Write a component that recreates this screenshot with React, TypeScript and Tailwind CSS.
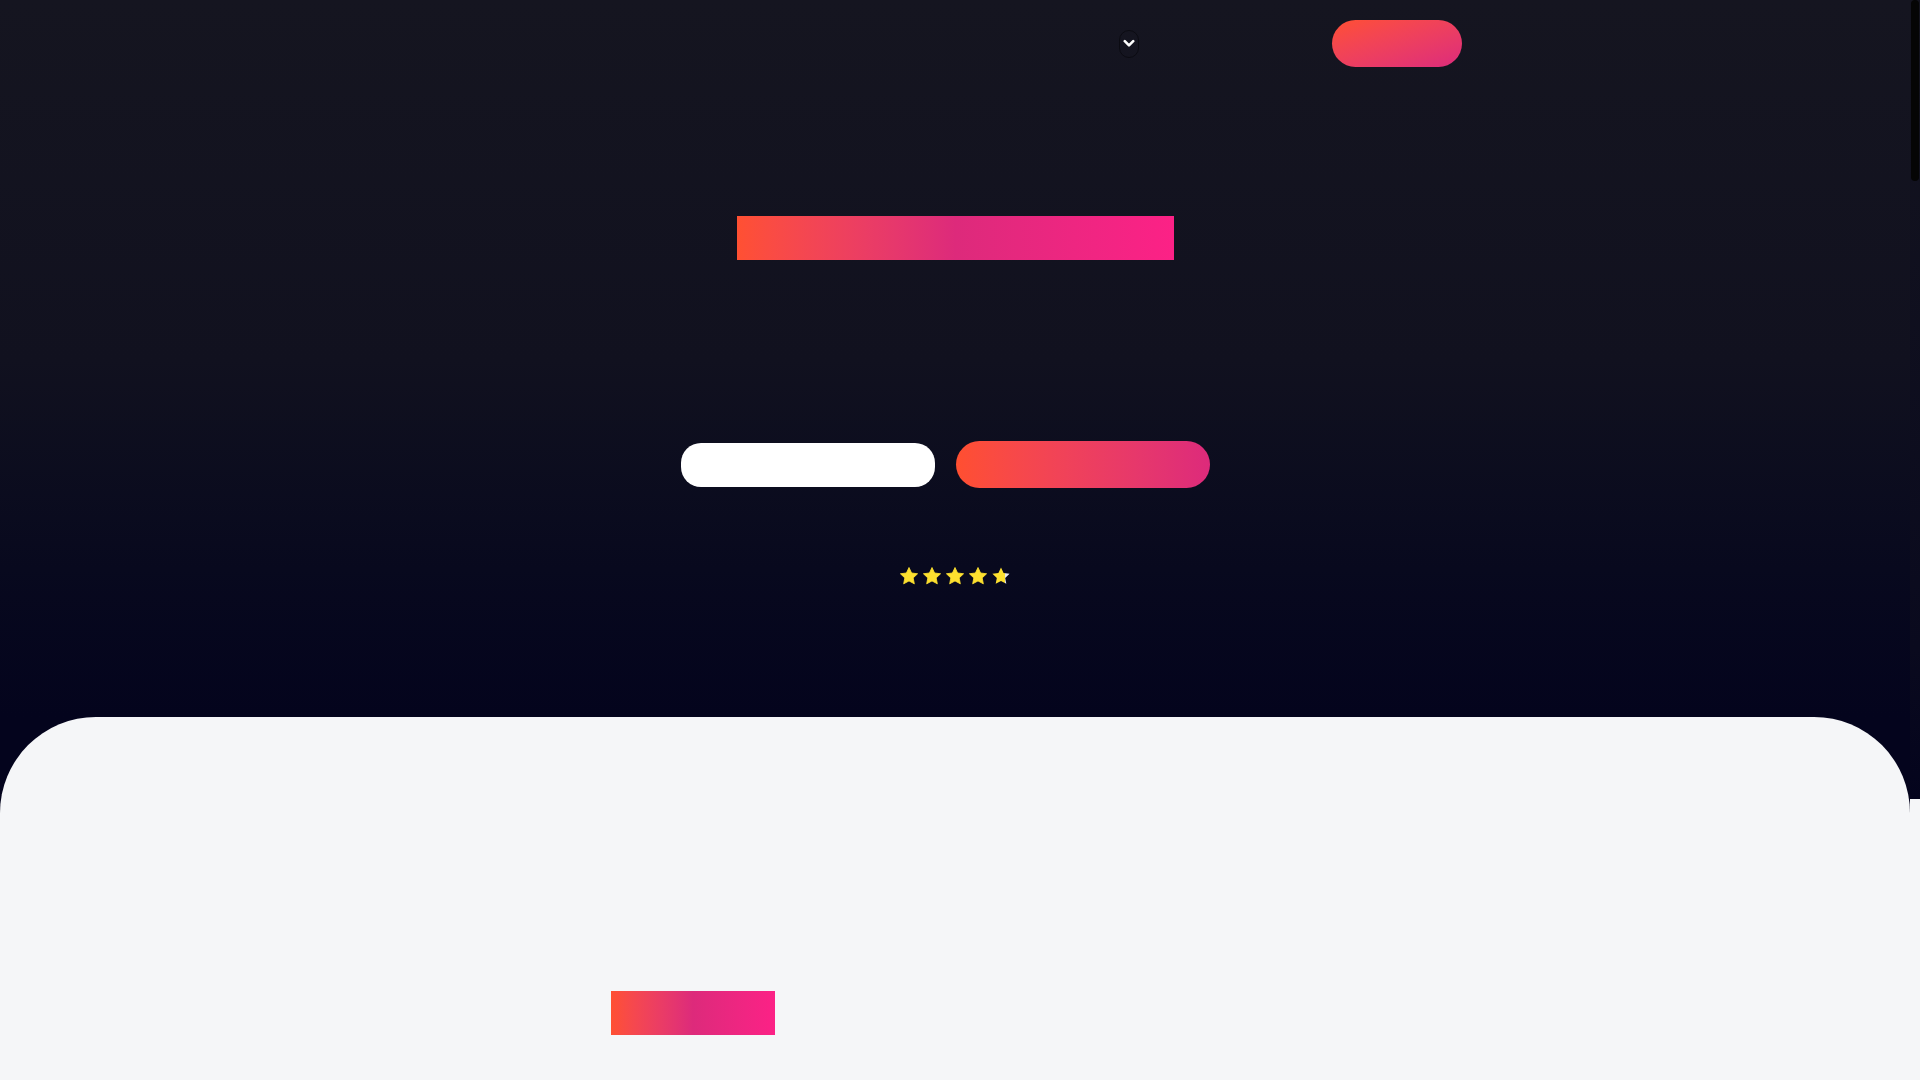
import React from "react";

function Star({ half }: { half?: boolean }) {
  return (
    <svg width="20" height="20" viewBox="0 0 24 24" aria-hidden="true">
      <defs>
        <linearGradient id="halfstar" x1="0" x2="1" y1="0" y2="0">
          <stop offset="72%" stopColor="#fde02f" />
          <stop offset="72%" stopColor="#e8e8f0" />
        </linearGradient>
      </defs>
      <path
        d="M12 1.8l3.1 6.6 7.2.9-5.3 5 1.4 7.1L12 17.9l-6.4 3.5L7 14.3l-5.3-5 7.2-.9L12 1.8z"
        fill={half ? "url(#halfstar)" : "#fde02f"}
        stroke={half ? "none" : "#fde02f"}
        strokeWidth="1"
        strokeLinejoin="round"
      />
    </svg>
  );
}

export default function App() {
  return (
    <div
      className="flex w-full bg-[#04041d]"
      style={{ fontFamily: "Inter, 'Noto Sans', sans-serif" }}
    >
      <main className="flex-1 min-w-0">
        <section className="bg-gradient-to-b from-[#151520] via-[#11111f] to-[#04041d]">
          <header className="h-[87px] flex items-center">
            <div className="w-[1119px] shrink-0" />
            <button
              className="w-[20px] h-[28px] rounded-full border border-[#0b0b12] flex items-center justify-center"
              aria-label="Menu"
            >
              <svg width="12" height="9" viewBox="0 0 12 9" aria-hidden="true">
                <path
                  d="M1.8 2.2L6 6.4l4.2-4.2"
                  fill="none"
                  stroke="#ffffff"
                  strokeWidth="2.6"
                  strokeLinecap="round"
                  strokeLinejoin="round"
                />
              </svg>
            </button>
            <div className="w-[193px] shrink-0" />
            <button className="w-[130px] h-[47px] rounded-full bg-gradient-to-br from-[#ff4f30] to-[#dd2a7b]" />
          </header>

          <div className="flex flex-col items-center pb-[131px]">
            <div className="mt-[129px] w-[437px] h-[44px] bg-gradient-to-r from-[#ff5032] via-[#dd2a7b] to-[#fc2186]" />

            <div className="mt-[181px] flex items-center gap-[21px] pr-[20px]">
              <button className="w-[254px] h-[44px] rounded-[20px] bg-white" />
              <button className="w-[254px] h-[47px] rounded-full bg-gradient-to-r from-[#ff4f30] to-[#dd2a7b]" />
            </div>

            <div className="mt-[77px] flex items-center gap-[3px] h-[21px]">
              <Star />
              <Star />
              <Star />
              <Star />
              <Star half />
            </div>
          </div>
        </section>

        <section className="rounded-t-[96px] bg-[#f5f6f8] min-h-[5600px] pt-[274px]">
          <div className="ml-[611px] w-[164px] h-[44px] bg-gradient-to-r from-[#ff5032] via-[#dd2a7b] to-[#fc2186]" />
        </section>
      </main>

      <aside className="sticky top-0 self-start h-screen w-[10px] shrink-0 bg-[linear-gradient(to_bottom,#14141f_0%,#0a0a1e_60%,#04041d_74%,#f5f6f8_74%)] px-[1px]">
        <div className="h-[181px] w-full rounded-full bg-[#050505]" />
      </aside>
    </div>
  );
}
